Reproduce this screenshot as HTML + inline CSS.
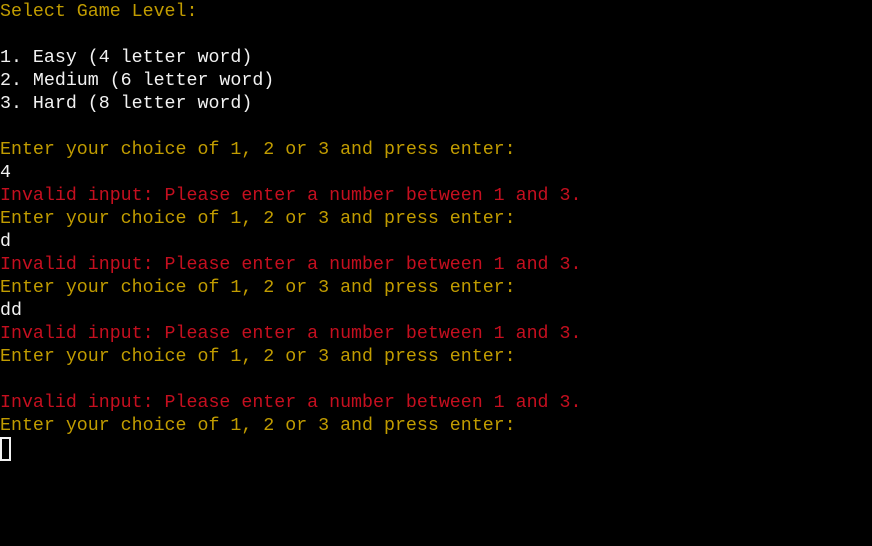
<!DOCTYPE html>
<html><head><meta charset="utf-8"><style>
html,body{margin:0;padding:0;background:#000;width:872px;height:546px;overflow:hidden}
pre{margin:0;position:absolute;left:0;top:1px;font-family:"Liberation Mono",monospace;font-size:18.3px;line-height:23px;color:#ccc}
.y{color:#c19c00}.w{color:#f2f2f2}.r{color:#c50f1f}
.cur{position:absolute;left:0;top:437px;width:7px;height:20px;border:2px solid #f2f2f2}
</style></head><body>
<pre><span class="y">Select Game Level:</span>

<span class="w">1. Easy (4 letter word)
2. Medium (6 letter word)
3. Hard (8 letter word)</span>

<span class="y">Enter your choice of 1, 2 or 3 and press enter:</span>
<span class="w">4</span>
<span class="r">Invalid input: Please enter a number between 1 and 3.</span>
<span class="y">Enter your choice of 1, 2 or 3 and press enter:</span>
<span class="w">d</span>
<span class="r">Invalid input: Please enter a number between 1 and 3.</span>
<span class="y">Enter your choice of 1, 2 or 3 and press enter:</span>
<span class="w">dd</span>
<span class="r">Invalid input: Please enter a number between 1 and 3.</span>
<span class="y">Enter your choice of 1, 2 or 3 and press enter:</span>

<span class="r">Invalid input: Please enter a number between 1 and 3.</span>
<span class="y">Enter your choice of 1, 2 or 3 and press enter:</span></pre>
<div class="cur"></div>
</body></html>
